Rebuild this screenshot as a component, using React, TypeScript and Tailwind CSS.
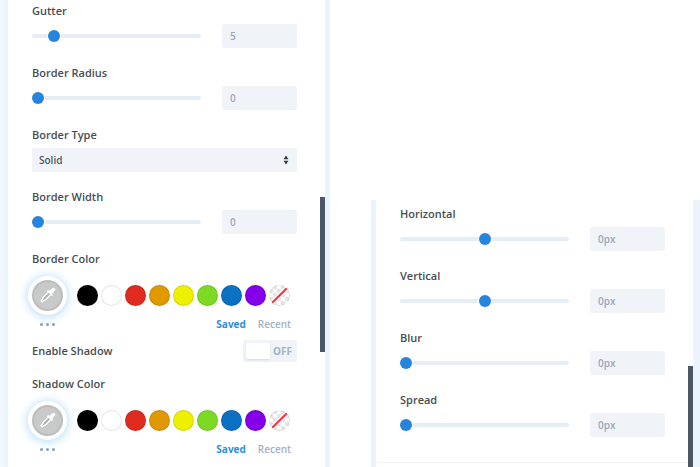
import { useId, useState } from "react"
import { clsx } from "clsx"

const SWATCHES = [
  { name: "Black", cls: "bg-black" },
  { name: "White", cls: "bg-white" },
  { name: "Red", cls: "bg-[#e02b20]" },
  { name: "Orange", cls: "bg-[#e09900]" },
  { name: "Yellow", cls: "bg-[#edf000]" },
  { name: "Green", cls: "bg-[#7cda24]" },
  { name: "Blue", cls: "bg-[#0c71c3]" },
  { name: "Purple", cls: "bg-[#8300e9]" },
]

const LABEL_CLS = "block text-[11px] leading-4 font-semibold text-[#474c53]"

type RangeFieldProps = {
  label: string
  initial: number
  min?: number
  max: number
  unit?: string
}

function RangeField({ label, initial, min = 0, max, unit = "" }: RangeFieldProps) {
  const id = useId()
  const [value, setValue] = useState(initial)

  return (
    <div>
      <label htmlFor={id} className={LABEL_CLS}>
        {label}
      </label>
      <div className="mt-[5px] flex items-center gap-[21px]">
        <input
          id={id}
          type="range"
          min={min}
          max={max}
          value={value}
          onChange={(e) => setValue(Number(e.target.value))}
          className="h-3 min-w-0 flex-1 cursor-pointer appearance-none bg-transparent [&::-webkit-slider-runnable-track]:h-1 [&::-webkit-slider-runnable-track]:rounded-full [&::-webkit-slider-runnable-track]:bg-[#e6edf5] [&::-webkit-slider-thumb]:-mt-1 [&::-webkit-slider-thumb]:size-3 [&::-webkit-slider-thumb]:appearance-none [&::-webkit-slider-thumb]:rounded-full [&::-webkit-slider-thumb]:bg-[#2585dc] [&::-webkit-slider-thumb]:shadow-[0_0_0_1px_#fff]"
        />
        <input
          type="text"
          aria-label={`${label} value`}
          value={`${value}${unit}`}
          onChange={(e) => setValue(parseInt(e.target.value, 10) || 0)}
          className="h-6 w-[75px] rounded-[2px] bg-[#f0f4f9] px-2 text-[10px] font-semibold text-[#98a7b8] outline-none"
        />
      </div>
    </div>
  )
}

function SelectField({ label, options }: { label: string; options: string[] }) {
  const id = useId()

  return (
    <div>
      <label htmlFor={id} className={LABEL_CLS}>
        {label}
      </label>
      <div className="relative mt-[5px]">
        <select
          id={id}
          className="block h-6 w-full appearance-none rounded-[2px] bg-[#f0f4f9] px-[7px] text-[10px] font-semibold text-[#4c5866] outline-none"
        >
          {options.map((o) => (
            <option key={o}>{o}</option>
          ))}
        </select>
        <svg
          viewBox="0 0 6 10"
          className="pointer-events-none absolute top-[7px] right-2 h-[10px] w-[6px] fill-[#32373c]"
        >
          <path d="M3 0.4 5.4 4.2H0.6ZM3 9.6 0.6 5.8H5.4Z" />
        </svg>
      </div>
    </div>
  )
}

function Eyedropper() {
  return (
    <svg viewBox="0 0 16 16" className="size-4" strokeLinecap="round" strokeLinejoin="round">
      <path
        d="M8.6 4.9 3.2 10.3 2.4 12.2 1 13.7 2.2 14.9 3.8 13.5 5.7 12.7 11 7.3"
        fill="#b2b4b4"
        stroke="#fff"
        strokeWidth="1.3"
      />
      <path
        d="M7.6 4 9 3.6 9.8 4.2 12 1.9C12.8 1 14 1 14.6 1.6 15.2 2.3 15 3.2 14.2 4L12 6.2 12.5 7.1 12 8.5Z"
        fill="#fff"
        stroke="#fff"
        strokeWidth="0.8"
      />
    </svg>
  )
}

function ColorField({ label }: { label: string }) {
  return (
    <fieldset>
      <legend className={LABEL_CLS}>{label}</legend>
      <div className="mt-2 flex h-10 items-center gap-[14px]">
        <button
          type="button"
          aria-label={`Pick ${label}`}
          className="flex size-[31px] shrink-0 items-center justify-center rounded-full border-2 border-[#bcbebe] bg-[#c8caca] shadow-[0_0_0_4px_#fff,0_1px_10px_5px_#b5dcf8]"
        >
          <Eyedropper />
        </button>
        <div className="flex gap-[3px]">
          {SWATCHES.map((s) => (
            <button
              key={s.name}
              type="button"
              aria-label={s.name}
              className={clsx(
                "size-[21px] rounded-full shadow-[inset_0_0_0_1px_rgba(0,0,0,0.1)]",
                s.cls
              )}
            />
          ))}
          <button
            type="button"
            aria-label="Transparent"
            className="size-[21px] overflow-hidden rounded-full bg-[repeating-conic-gradient(#e4e4e4_0_25%,#fff_0_50%)] bg-[length:8px_8px] shadow-[inset_0_0_0_1px_rgba(0,0,0,0.06)]"
          >
            <svg viewBox="0 0 20 20" className="size-full">
              <path d="M3 17 17 3" stroke="#fff" strokeWidth="4" />
              <path d="M3 17 17 3" stroke="#f5333f" strokeWidth="2" />
            </svg>
          </button>
        </div>
      </div>
      <div className="mt-px flex h-4 items-center justify-between pr-[6px] pl-2">
        <button type="button" aria-label="More colors" className="flex gap-[3px]">
          <span className="size-[3px] rounded-full bg-[#8a9fb8]" />
          <span className="size-[3px] rounded-full bg-[#8a9fb8]" />
          <span className="size-[3px] rounded-full bg-[#8a9fb8]" />
        </button>
        <div className="flex gap-3 text-[10px] leading-4">
          <button type="button" className="font-bold text-[#2b8fe0]">
            Saved
          </button>
          <button type="button" className="font-semibold text-[#a3b1c4]">
            Recent
          </button>
        </div>
      </div>
    </fieldset>
  )
}

function ToggleField({ label }: { label: string }) {
  const id = useId()
  const [on, setOn] = useState(false)

  return (
    <div className="flex items-center justify-between">
      <label htmlFor={id} className={LABEL_CLS}>
        {label}
      </label>
      <label
        className={clsx(
          "relative flex h-[22px] w-[54px] cursor-pointer items-center gap-[3px] rounded-[2px] bg-[#f0f4f9] px-[3px]",
          on && "flex-row-reverse"
        )}
      >
        <input
          id={id}
          type="checkbox"
          checked={on}
          onChange={(e) => setOn(e.target.checked)}
          className="sr-only"
        />
        <span className="h-4 w-6 rounded-[2px] bg-white shadow-[0_1px_2px_rgba(60,80,110,0.15)]" />
        <span className="text-[10px] leading-4 font-bold text-[#a3b1c4]">{on ? "ON" : "OFF"}</span>
      </label>
    </div>
  )
}

export default function App() {
  return (
    <main className="grid min-h-screen grid-cols-[330fr_329fr] gap-[41px] bg-white font-['Open_Sans',sans-serif]">
      <section className="relative border-r-[5px] border-[#ebf4fd] bg-[linear-gradient(90deg,#f4f9fe_0,#e9f4fe_8px,#fff_8px)] pt-[3px] pr-7 pb-2 pl-8">
        <div className="flex flex-col gap-[17px]">
          <RangeField label="Gutter" initial={5} max={50} />
          <RangeField label="Border Radius" initial={0} max={50} />
          <SelectField label="Border Type" options={["Solid", "Dashed", "Dotted", "Double"]} />
          <RangeField label="Border Width" initial={0} max={50} />
          <ColorField label="Border Color" />
        </div>
        <div className="mt-2 flex flex-col gap-[14px]">
          <ToggleField label="Enable Shadow" />
          <ColorField label="Shadow Color" />
        </div>
        <div className="absolute top-[197px] right-0 h-[155px] w-[5px] bg-[#4c5866]" />
      </section>

      <section className="relative mt-[200px] border-r-[7px] border-l-[5px] border-[#ebf4fd]">
        <div className="flex flex-col gap-[17px] border-b border-[#f1f5f9] pt-[6px] pr-7 pb-[25px] pl-6">
          <RangeField label="Horizontal" initial={0} min={-80} max={80} unit="px" />
          <RangeField label="Vertical" initial={0} min={-80} max={80} unit="px" />
          <RangeField label="Blur" initial={0} max={80} unit="px" />
          <RangeField label="Spread" initial={0} max={80} unit="px" />
        </div>
        <div className="absolute top-[166px] right-0 bottom-0 w-[5px] bg-[#4c5866]" />
      </section>
    </main>
  )
}
